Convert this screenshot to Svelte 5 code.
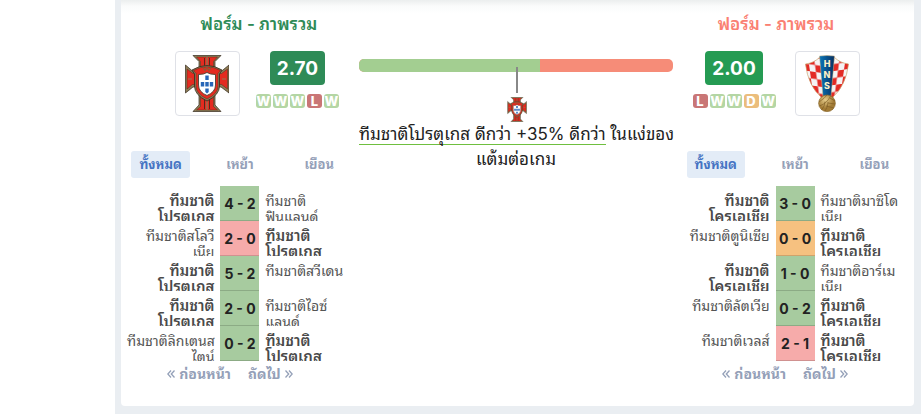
<script>
  const por = ['ทีมชาติ', 'โปรตุเกส'];
  const cro = ['ทีมชาติ', 'โครเอเชีย'];

  const teams = [
    {
      id: 'por',
      side: 'left',
      rating: '2.70',
      form: ['W', 'W', 'W', 'L', 'W'],
      matches: [
        { home: por, away: ['ทีมชาติ', 'ฟินแลนด์'], score: '4 - 2', result: 'win', own: 'home' },
        { home: ['ทีมชาติสโลวี', 'เนีย'], away: por, score: '2 - 0', result: 'loss', own: 'away' },
        { home: por, away: ['ทีมชาติสวีเดน'], score: '5 - 2', result: 'win', own: 'home' },
        { home: por, away: ['ทีมชาติไอซ์', 'แลนด์'], score: '2 - 0', result: 'win', own: 'home' },
        { home: ['ทีมชาติลิกเตนส', 'ไตน์'], away: por, score: '0 - 2', result: 'win', own: 'away' }
      ]
    },
    {
      id: 'cro',
      side: 'right',
      rating: '2.00',
      form: ['L', 'W', 'W', 'D', 'W'],
      matches: [
        { home: cro, away: ['ทีมชาติมาซิโด', 'เนีย'], score: '3 - 0', result: 'win', own: 'home' },
        { home: ['ทีมชาติตูนิเซีย'], away: cro, score: '0 - 0', result: 'draw', own: 'away' },
        { home: cro, away: ['ทีมชาติอาร์เม', 'เนีย'], score: '1 - 0', result: 'win', own: 'home' },
        { home: ['ทีมชาติลัตเวีย'], away: cro, score: '0 - 2', result: 'win', own: 'away' },
        { home: ['ทีมชาติเวลส์'], away: cro, score: '2 - 1', result: 'loss', own: 'away' }
      ]
    }
  ];

  const tabs = ['ทั้งหมด', 'เหย้า', 'เยือน'];
  let active = $state({ por: 0, cro: 0 });
</script>

{#snippet portugal()}
  <svg class="crest" viewBox="0 0 44 57" aria-hidden="true">
    <g stroke="#33291d" stroke-width="0.7" stroke-linejoin="round">
      <path fill="#8f7d56" d="M8 .5h28l-6 6v10h6l8-6.500v28l-8-6h-6v18l6 6.500H8l6-6.500V32H8l-7.500 6V10L8 16.500h6v-10z" />
      <path fill="#e42b20" stroke-width="0.400" d="M11.500 2h21L28.500 6.500v12h8l6-4.500v20l-6-4.500h-8v22l4 3.500h-21l4-3.500v-22h-8L2 34V14l6 4.500h7.500v-12z" />
    </g>
    <path fill="none" stroke="#8f7d56" stroke-width="1.200" d="M22 2v10M22 44v11M3 24h4M37 24h4" />
    <path fill="none" stroke="#33291d" stroke-width="0.800" d="M19.500 3v9m5-9v9M19.500 44v10m5-10v10" />
    <path fill="#8f7d56" stroke="#33291d" stroke-width="0.8" d="M7 15q15-9 30 0l-2.500 4v12q0 9-12.500 15Q9.500 40 9.500 31V19z" />
    <path fill="#e42b20" stroke="#33291d" stroke-width="0.4" d="M8.500 15.500q13.500-7.500 27 0l-2.500 3v12.500q0 8-11 13-11-5-11-13V18.500z" />
    <path fill="none" stroke="#8a5a35" stroke-width="1.200" d="M18 12.500l2 3 2-3 2 3 2-3" />
    <path fill="#fff" stroke="#4d4030" stroke-width="0.900" d="M13.500 19.500q5.500 0 8.500-2 3 2 8.500 2V30q0 7-8.500 10.500Q13.500 37 13.500 30z" />
    <path fill="#2866b7" d="M20.300 20.500h3.400v4.500h-3.400zm0 6.500h3.400v4.500h-3.400zm0 6.500h3.400V37l-1.700 1.500-1.700-1.500zM15.800 27h3.400v4.500h-3.400zm9 0h3.400v4.500h-3.400z" />
  </svg>
{/snippet}

{#snippet croatia()}
  <svg class="crest" viewBox="0 0 44 57" aria-hidden="true">
    <defs>
      <pattern id="checkL" width="12" height="14" patternUnits="userSpaceOnUse" patternTransform="translate(3 2) skewY(8) skewX(8)">
        <path fill="#f5f3f4" d="M0 0h12v14H0z" />
        <path fill="#e32a25" d="M0 0h6v7H0zM6 7h6v7H6z" />
      </pattern>
      <pattern id="checkR" width="12" height="14" patternUnits="userSpaceOnUse" patternTransform="translate(29 2) skewY(-8) skewX(-8)">
        <path fill="#f5f3f4" d="M0 0h12v14H0z" />
        <path fill="#e32a25" d="M6 0h6v7H6zM0 7h6v7H0z" />
      </pattern>
      <linearGradient id="band" x2="1">
        <stop offset="0" stop-color="#0876b9" />
        <stop offset="1" stop-color="#082f61" />
      </linearGradient>
      <radialGradient id="ball" cx="0.4" cy="0.3">
        <stop offset="0" stop-color="#e5cb89" />
        <stop offset="1" stop-color="#a27b35" />
      </radialGradient>
    </defs>
    <path fill="url(#checkL)" stroke="#c9a46b" stroke-width="0.700" d="M15 2Q9 8 .500 9 3 31 17 43h5V1z" />
    <path fill="url(#checkR)" stroke="#c9a46b" stroke-width="0.700" d="M29 2q6 6 14.500 7Q41 31 27 43h-5V1z" />
    <path fill="url(#band)" stroke="#d6bd8b" stroke-width="0.500" d="M14.500 1q7.500-1 15 0L26 42h-8z" />
    <g class="letters" text-anchor="middle">
      <text x="22" y="12">H</text>
      <text x="22" y="23">N</text>
      <text x="22" y="34">S</text>
    </g>
    <circle cx="22" cy="48.300" r="8.400" fill="url(#ball)" stroke="#876528" stroke-width="0.600" />
    <path fill="none" stroke="#785820" stroke-width="0.600" d="M14 47q6-4 8-7M14.500 51q8-3 11-10M17 54.500q3-4 3-8M20 56q3-4 3-9M23 48l7 1M21 51l8 2M25 43l5 3" />
  </svg>
{/snippet}

{#snippet chevrons(dir)}
  <svg class="chevrons" viewBox="0 0 8 8" aria-hidden="true">
    <path d={dir === 'prev' ? 'M4 .5.800 4 4 7.500M7.500.5 4.300 4l3.200 3.500' : 'M.5.500 3.700 4 .500 7.500M4 .5 7.200 4 4 7.500'} />
  </svg>
{/snippet}

{#snippet teamColumn(team)}
  <section class="team {team.side}">
    <div class="overview">
      <h2>ฟอร์ม - ภาพรวม</h2>
      <div class="summary">
        <a class="logo" href="#{team.id}" aria-label={team.id === 'por' ? por.join('') : cro.join('')}>
          {#if team.id === 'por'}{@render portugal()}{:else}{@render croatia()}{/if}
        </a>
        <div class="numbers">
          <strong class="rating">{team.rating}</strong>
          <div class="form">
            {#each team.form as f}<span class={f}>{f}</span>{/each}
          </div>
        </div>
      </div>
    </div>
    <div class="tabs">
      {#each tabs as tab, i}
        <div>
          <button class:active={active[team.id] === i} onclick={() => (active[team.id] = i)}>{tab}</button>
        </div>
      {/each}
    </div>
    <table>
      <colgroup><col /><col class="mid" /><col /></colgroup>
      <tbody>
        {#each team.matches as m}
          <tr>
            <td class="home" class:own={m.own === 'home'}>
              <div class="name">{#each m.home as line}<span>{line}</span>{/each}</div>
            </td>
            <td class="score {m.result}">{m.score}</td>
            <td class="away" class:own={m.own === 'away'}>
              <div class="name">{#each m.away as line}<span>{line}</span>{/each}</div>
            </td>
          </tr>
        {/each}
      </tbody>
    </table>
    <nav>
      <button>{@render chevrons('prev')}ก่อนหน้า</button>
      <button>ถัดไป{@render chevrons('next')}</button>
    </nav>
  </section>
{/snippet}

<main>
  <div class="card">
    {@render teamColumn(teams[0])}
    <section class="compare">
      <div class="bar"><div class="share" style="width: 57.5%"></div></div>
      <div class="marker">
        <i></i>
        {@render portugal()}
      </div>
      <p><span class="better">ทีมชาติโปรตุเกส ดีกว่า +35% ดีกว่า</span> ในแง่ของ<br />แต้มต่อเกม</p>
    </section>
    {@render teamColumn(teams[1])}
  </div>
</main>

<style>
  :global(body) {
    background: #fff;
  }
  main {
    box-sizing: border-box;
    min-height: 100vh;
    margin-left: 115px;
    padding: 0 7px 8px 6px;
    background: #eaeef2;
    font-family: Inter, 'Noto Sans Thai Looped', 'Noto Looped Thai', Waree, Loma, Garuda, Tahoma, sans-serif;
    color: #222;
  }
  .card {
    display: grid;
    grid-template-columns: minmax(0, 3fr) minmax(0, 4fr) minmax(0, 3fr);
    padding-bottom: 20px;
    border-radius: 0 0 4px 4px;
    background: linear-gradient(#ebeeee, #fafbfb 6px, #fff 14px);
  }
  button {
    border: 0;
    background: none;
    font: inherit;
    font-weight: 700;
    color: #94a0b8;
    cursor: pointer;
  }
  .overview {
    height: 116px;
    padding-top: 12px;
    box-sizing: border-box;
  }
  .left h2 {
    padding-left: 38px;
  }
  .left .summary {
    padding-left: 34px;
  }
  .right .overview {
    padding-right: 38px;
  }
  h2 {
    margin: 0 0 15px;
    font-size: 17px;
    line-height: 24px;
    font-weight: 600;
    text-align: center;
    color: #2e8b57;
  }
  .right h2 {
    color: #fa8072;
  }
  .summary {
    display: flex;
    justify-content: center;
    gap: 16px;
  }
  .right .summary {
    flex-direction: row-reverse;
    gap: 19px;
  }
  .logo {
    display: grid;
    place-items: center;
    box-sizing: border-box;
    width: 65px;
    height: 65px;
    border: 1px solid #dfe1e7;
    border-radius: 4px;
  }
  .crest {
    display: block;
    width: 44px;
    height: 57px;
  }
  .letters {
    font: 800 9px Inter, sans-serif;
    fill: #fbf0c8;
  }
  .numbers {
    display: flex;
    flex-direction: column;
    align-items: center;
    gap: 9px;
  }
  .rating {
    padding: 0 7px;
    border-radius: 4px;
    background: #2e8b57;
    color: #fff;
    font-size: 19px;
    line-height: 35px;
    height: 34px;
    font-weight: 700;
  }
  .right .rating {
    background: #259b53;
  }
  .form {
    display: flex;
    gap: 2px;
  }
  .form span {
    width: 15px;
    height: 14px;
    border-radius: 3px;
    background: #b4d6a4;
    color: #fff;
    font-size: 13px;
    line-height: 15px;
    font-weight: 800;
    display: flex;
    justify-content: center;
  }
  .form .L {
    background: #c97676;
  }
  .form .D {
    background: #ebbd7c;
  }
  .tabs {
    display: grid;
    grid-template-columns: repeat(3, 1fr);
    justify-items: center;
    margin: 35px 0 8px;
  }
  .tabs button {
    height: 27px;
    padding: 0 8px;
    border-radius: 3px;
    font-size: 13px;
    line-height: 27px;
  }
  .tabs .active {
    background: #e3ecf7;
    color: #4674c3;
  }
  table {
    width: 100%;
    table-layout: fixed;
    border-spacing: 0;
    font-size: 14px;
    color: #555;
  }
  .mid {
    width: 39px;
  }
  td {
    height: 35px;
    padding: 0;
    vertical-align: top;
  }
  .name {
    height: 35px;
    padding: 7px 6px 0;
    box-sizing: border-box;
    overflow: hidden;
    line-height: 16px;
    white-space: nowrap;
  }
  .name span {
    display: block;
  }
  .home {
    text-align: right;
  }
  .own {
    font-size: 15px;
    font-weight: 600;
    color: #4a4a4a;
  }
  .score {
    box-sizing: border-box;
    border-bottom: 1px solid #8cab85;
    background: #a7cb9f;
    color: #222;
    font-size: 14px;
    font-weight: 700;
    text-align: center;
    vertical-align: middle;
    white-space: nowrap;
  }
  .score.loss {
    border-color: #d09190;
    background: #f6abaa;
  }
  .score.draw {
    border-color: #cfa36b;
    background: #f6c180;
  }
  nav {
    display: flex;
    justify-content: center;
    gap: 17px;
    padding-right: 20px;
    margin-top: 1px;
  }
  nav button {
    display: flex;
    align-items: center;
    gap: 4px;
    height: 24px;
    padding: 0;
    font-size: 14px;
    line-height: 24px;
  }
  .chevrons {
    width: 8px;
    height: 8px;
    fill: none;
    stroke: #94a0b8;
    stroke-width: 1.3;
  }
  .compare {
    padding: 59px 3px 0 0;
    text-align: center;
  }
  .bar {
    height: 13px;
    border-radius: 5px;
    overflow: hidden;
    background: #f68c78;
  }
  .share {
    height: 100%;
    background: #a3ce91;
  }
  .marker {
    display: flex;
    flex-direction: column;
    align-items: center;
    gap: 4px;
    margin: -5px 0 0 3px;
    position: relative;
  }
  .marker i {
    width: 2px;
    height: 26px;
    background: #888;
  }
  .marker .crest {
    width: 20px;
    height: 25px;
  }
  p {
    margin: 0;
    font-size: 17px;
    line-height: 25px;
    white-space: nowrap;
  }
  .better {
    border-bottom: 1px solid #6fbf3f;
  }
</style>
